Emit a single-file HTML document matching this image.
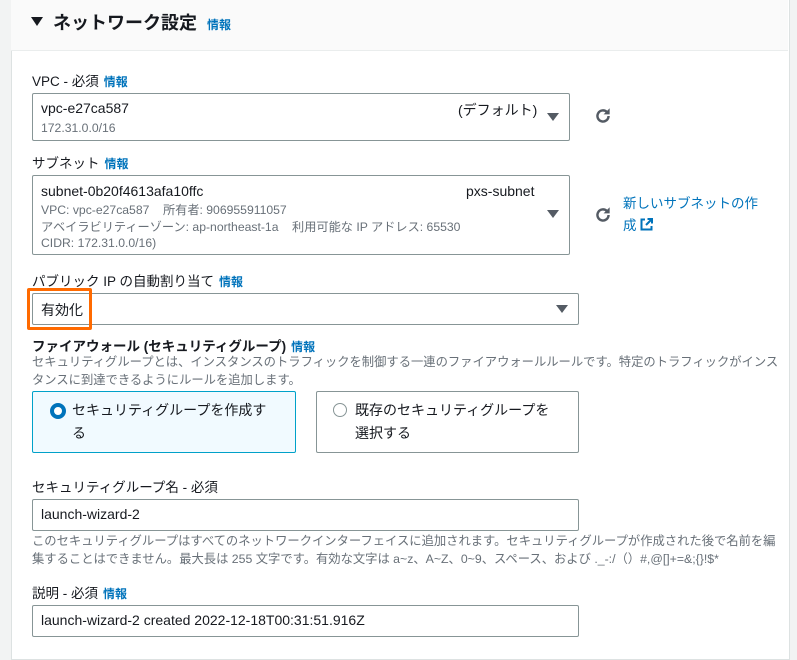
<!DOCTYPE html><html><head><meta charset="utf-8"><style>
body{margin:0;width:797px;height:643px;overflow:hidden;background:#f2f3f3;font-family:"Liberation Sans","Noto Sans CJK JP",sans-serif;color:#16191f;position:relative}
.card{position:absolute;left:11px;top:-2px;width:777px;height:660px;background:#fff;border:1px solid #dde2e2}
.hdr{position:absolute;left:11px;top:0;width:777px;height:50px;background:#fafafa;border-bottom:1px solid #eaeded}
.a{position:absolute;white-space:nowrap}
.lbl{font-size:13.5px;color:#16191f}
.info{color:#0073bb;font-size:12px;font-weight:bold;margin-left:5px}
.box{position:absolute;border:1px solid #879596;border-radius:2px;background:#fff;box-sizing:border-box}
.sm{font-size:12.2px;color:#687078}
.tri{position:absolute;width:0;height:0;border-left:6px solid transparent;border-right:6px solid transparent;border-top:8px solid #545b64}
.help{font-size:12.3px;color:#687078;line-height:17.5px}
</style></head><body>
<div class="card"></div>
<div class="hdr"></div>
<div class="tri" style="left:31px;top:17px;border-left-width:6px;border-right-width:6px;border-top:9px solid #16191f"></div>
<div class="a" style="left:53px;top:9px;font-size:18px;font-weight:bold">ネットワーク設定<span class="info" style="margin-left:10px">情報</span></div>

<div class="a lbl" style="left:32px;top:70px">VPC - 必須<span class="info">情報</span></div>
<div class="box" style="left:32px;top:93px;width:538px;height:48px"></div>
<div class="a" style="left:41px;top:100px;font-size:14px">vpc-e27ca587</div>
<div class="a sm" style="left:41px;top:121px">172.31.0.0/16</div>
<div class="a" style="left:458px;top:100px;font-size:14px">(デフォルト)</div>
<div class="tri" style="left:547px;top:113px"></div>
<svg class="a" style="left:593px;top:106px" width="20" height="20" viewBox="0 0 18 18"><path d="M14 9a5 5 0 1 1-1.5-3.6" fill="none" stroke="#545b64" stroke-width="2.2"/><path d="M15 2v5.5h-5.5z" fill="#545b64"/></svg>

<div class="a lbl" style="left:32px;top:152px">サブネット<span class="info">情報</span></div>
<div class="box" style="left:32px;top:175px;width:538px;height:80px"></div>
<div class="a" style="left:41px;top:183px;font-size:14px">subnet-0b20f4613afa10ffc</div>
<div class="a" style="left:466px;top:183px;font-size:14px">pxs-subnet</div>
<div class="a sm" style="left:41px;top:202px;line-height:16.5px">VPC: vpc-e27ca587 &nbsp;&nbsp;&nbsp;所有者: 906955911057<br>アベイラビリティーゾーン: ap-northeast-1a &nbsp;&nbsp;&nbsp;利用可能な IP アドレス: 65530<br>CIDR: 172.31.0.0/16)</div>
<div class="tri" style="left:547px;top:210px"></div>
<svg class="a" style="left:593px;top:205px" width="20" height="20" viewBox="0 0 18 18"><path d="M14 9a5 5 0 1 1-1.5-3.6" fill="none" stroke="#545b64" stroke-width="2.2"/><path d="M15 2v5.5h-5.5z" fill="#545b64"/></svg>
<div class="a" style="left:623px;top:193px;font-size:13.5px;color:#0073bb;line-height:22px">新しいサブネットの作<br>成 <svg width="13" height="13" viewBox="0 0 13 13" style="vertical-align:-1px"><path d="M5 1.5H1.5v10h10V8" fill="none" stroke="#0073bb" stroke-width="2"/><path d="M6 7l5.5-5.5M7.5 1h4.5v4.5" fill="none" stroke="#0073bb" stroke-width="2"/></svg></div>

<div class="a lbl" style="left:32px;top:270px">パブリック IP の自動割り当て<span class="info">情報</span></div>
<div class="box" style="left:32px;top:293px;width:547px;height:32px"></div>
<div style="position:absolute;left:27px;top:288px;width:65px;height:42px;border:3px solid #ff6a00;box-sizing:border-box;border-radius:2px"></div>
<div class="a" style="left:41px;top:300px;font-size:14px">有効化</div>
<div class="tri" style="left:556px;top:305px"></div>

<div class="a" style="left:32px;top:335px;font-size:13.5px;font-weight:bold">ファイアウォール (セキュリティグループ)<span class="info">情報</span></div>
<div class="a help" style="left:32px;top:354px">セキュリティグループとは、インスタンスのトラフィックを制御する一連のファイアウォールルールです。特定のトラフィックがインス<br>タンスに到達できるようにルールを追加します。</div>
<div class="box" style="left:32px;top:391px;width:264px;height:62px;background:#f1faff;border-color:#00a1c9"></div>
<div class="a" style="left:50px;top:403px;width:8px;height:8px;border:4px solid #0073bb;border-radius:50%;background:#fff"></div>
<div class="a" style="left:72px;top:399px;font-size:14px;line-height:23px">セキュリティグループを作成す<br>る</div>
<div class="box" style="left:316px;top:391px;width:263px;height:62px"></div>
<div class="a" style="left:333px;top:403px;width:12px;height:12px;border:1.5px solid #879596;border-radius:50%"></div>
<div class="a" style="left:355px;top:399px;font-size:14px;line-height:23px">既存のセキュリティグループを<br>選択する</div>

<div class="a lbl" style="left:32px;top:476px">セキュリティグループ名 - 必須</div>
<div class="box" style="left:32px;top:499px;width:547px;height:32px"></div>
<div class="a" style="left:41px;top:506px;font-size:14px">launch-wizard-2</div>
<div class="a help" style="left:32px;top:533px">このセキュリティグループはすべてのネットワークインターフェイスに追加されます。セキュリティグループが作成された後で名前を編<br>集することはできません。最大長は 255 文字です。有効な文字は a~z、A~Z、0~9、スペース、および ._-:/（）#,@[]+=&amp;;{}!$*</div>

<div class="a lbl" style="left:32px;top:582px">説明 - 必須<span class="info">情報</span></div>
<div class="box" style="left:32px;top:605px;width:547px;height:32px"></div>
<div class="a" style="left:41px;top:612px;font-size:14px">launch-wizard-2 created 2022-12-18T00:31:51.916Z</div>
</body></html>
